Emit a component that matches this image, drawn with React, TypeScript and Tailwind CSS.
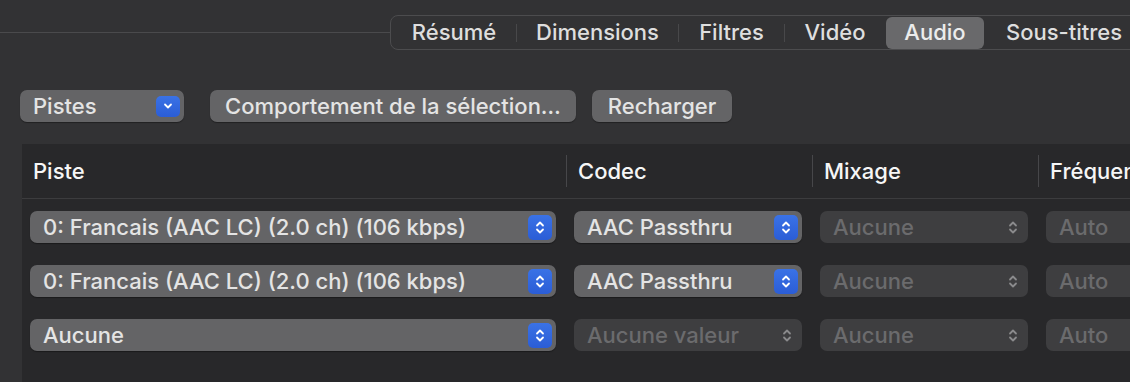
import React from 'react'

const tabs = [
  { label: 'Résumé', w: 'w-[124px]' },
  { label: 'Dimensions', w: 'w-[161px]' },
  { label: 'Filtres', w: 'w-[105px]' },
  { label: 'Vidéo', w: 'w-[100px]' },
  { label: 'Audio', w: 'w-[98px]', active: true },
  { label: 'Sous-titres', w: 'w-[158px]' },
]

const rows = [
  [
    { text: '0: Francais (AAC LC) (2.0 ch) (106 kbps)', on: true },
    { text: 'AAC Passthru', on: true },
    { text: 'Aucune', on: false },
    { text: 'Auto', on: false },
  ],
  [
    { text: '0: Francais (AAC LC) (2.0 ch) (106 kbps)', on: true },
    { text: 'AAC Passthru', on: true },
    { text: 'Aucune', on: false },
    { text: 'Auto', on: false },
  ],
  [
    { text: 'Aucune', on: true },
    { text: 'Aucune valeur', on: false },
    { text: 'Aucune', on: false },
    { text: 'Auto', on: false },
  ],
]

function UpDown({ color = '#ffffff' }: { color?: string }) {
  return (
    <svg width="10" height="15" viewBox="0 0 10 15" fill="none">
      <path d="M2 5.5 L5 2.5 L8 5.5" stroke={color} strokeWidth="1.8" strokeLinecap="round" strokeLinejoin="round" />
      <path d="M2 9.5 L5 12.5 L8 9.5" stroke={color} strokeWidth="1.8" strokeLinecap="round" strokeLinejoin="round" />
    </svg>
  )
}

function Popup({ text, on, wide }: { text: string; on: boolean; wide?: boolean }) {
  if (!on) {
    return (
      <div
        className={`flex h-[32px] items-center justify-between rounded-[7px] bg-[#3e3e40] pl-[13px] pr-[10px] text-[#6b6b6d] ${
          wide ? 'w-[200px]' : ''
        }`}
      >
        <span className="whitespace-nowrap">{text}</span>
        <UpDown color="#8a8a8c" />
      </div>
    )
  }
  return (
    <div className="flex h-[32px] items-center justify-between rounded-[7px] bg-[#646466] pl-[13px] pr-[4px] text-[#e4e4e4] shadow-[0_1px_1px_rgba(0,0,0,0.35)]">
      <span className="whitespace-nowrap">{text}</span>
      <div className="flex h-[25px] w-[24px] items-center justify-center rounded-[5px] bg-gradient-to-b from-[#3a72e6] to-[#2b5dd6]">
        <UpDown />
      </div>
    </div>
  )
}

export default function App() {
  return (
    <div className="h-[382px] w-[1130px] overflow-hidden bg-[#323234] font-['Inter',sans-serif] text-[22px] font-medium text-[#e4e4e4]">
      {/* tab strip */}
      <div className="flex items-center pt-[15px]">
        <div className="h-px w-[390px] shrink-0 bg-[#4a4a4c]" />
        <div className="flex h-[35px] shrink-0 items-center rounded-[8px] border border-[#4c4c4e] px-[1px]">
          {tabs.map((t, i) => {
            const next = tabs[i + 1]
            const divider = next && !t.active && !next.active
            return (
              <React.Fragment key={t.label}>
                <div
                  className={`flex h-[32px] ${t.w} items-center justify-center rounded-[6px] ${
                    t.active ? 'bg-[#69696b] text-[#ececec]' : 'text-[#dedede]'
                  }`}
                >
                  {t.label}
                </div>
                {next && <div className={`h-[18px] w-px ${divider ? 'bg-[#48484a]' : ''}`} />}
              </React.Fragment>
            )
          })}
        </div>
      </div>

      {/* toolbar */}
      <div className="mt-[40px] flex items-center pl-[20px]">
        <div className="flex h-[32px] w-[164px] items-center justify-between rounded-[7px] bg-[#646466] pl-[13px] pr-[4px] shadow-[0_1px_1px_rgba(0,0,0,0.35)]">
          <span>Pistes</span>
          <div className="flex h-[21px] w-[24px] items-center justify-center rounded-[5px] bg-gradient-to-b from-[#3a72e6] to-[#2b5dd6]">
            <svg width="10" height="8" viewBox="0 0 10 8" fill="none">
              <path d="M2 2.5 L5 5.5 L8 2.5" stroke="#fff" strokeWidth="1.8" strokeLinecap="round" strokeLinejoin="round" />
            </svg>
          </div>
        </div>
        <button className="ml-[26px] flex h-[32px] w-[366px] items-center justify-center rounded-[7px] bg-[#646466] shadow-[0_1px_1px_rgba(0,0,0,0.35)]">
          Comportement de la sélection…
        </button>
        <button className="ml-[16px] flex h-[32px] w-[140px] items-center justify-center rounded-[7px] bg-[#646466] shadow-[0_1px_1px_rgba(0,0,0,0.35)]">
          Recharger
        </button>
      </div>

      {/* table */}
      <div className="ml-[22px] mt-[22px] h-[238px] bg-[#28282a]">
        <div className="grid h-[55px] grid-cols-[544px_246px_226px_1fr] items-center border-b border-[#3c3c3e] text-[#f6f6f6]">
          {['Piste', 'Codec', 'Mixage', 'Fréquence'].map((h, i) => (
            <div key={h} className="flex h-[32px] items-center">
              {i > 0 && <div className="h-[32px] w-px bg-[#47474a]" />}
              <span className="whitespace-nowrap pl-[11px]">{h}</span>
            </div>
          ))}
        </div>
        <div className="flex flex-col gap-[22px] pt-[12px]">
          {rows.map((r, ri) => (
            <div key={ri} className="grid grid-cols-[544px_246px_226px_1fr]">
              {r.map((c, ci) => (
                <div key={ci} className="pl-[8px] pr-[10px]">
                  <Popup text={c.text} on={c.on} wide={ci === 3} />
                </div>
              ))}
            </div>
          ))}
        </div>
      </div>
    </div>
  )
}
